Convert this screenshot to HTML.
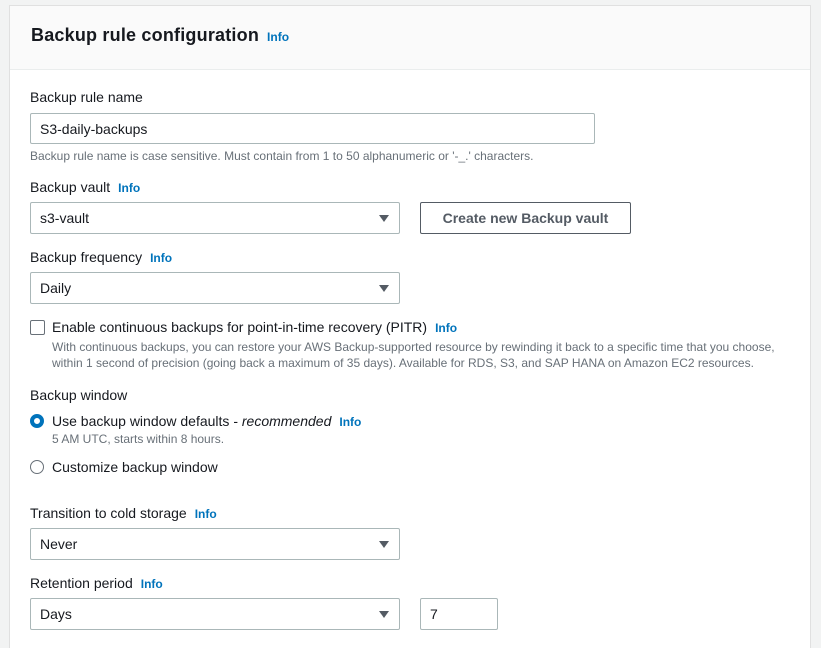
<!DOCTYPE html>
<html><head><style>
*{box-sizing:border-box;margin:0;padding:0}
html{width:821px;height:648px;overflow:hidden}
body{width:821px;height:648px;background:#f2f3f3;font-family:"Liberation Sans",sans-serif;color:#16191f;position:relative;overflow:hidden}
.panel{position:absolute;left:9px;top:5px;width:802px;height:643px;background:#fff;border:1px solid #e0e0e0;border-bottom:none}
.hdr{position:absolute;left:0;top:0;width:100%;height:64px;background:#fafafa;border-bottom:1px solid #eaeded}
.a{position:absolute;white-space:nowrap}
.lbl{font-size:14px;color:#16191f}
.info{font-size:12px;font-weight:bold;color:#0073bb;margin-left:8px}
.hint{font-size:12px;color:#687078}
.box{position:absolute;border:1px solid #aab7b8;border-radius:2px;background:#fff;font-size:14px;padding-left:9px;display:flex;align-items:center}
.tri{position:absolute;right:10px;top:12px;width:0;height:0;border-left:5px solid transparent;border-right:5px solid transparent;border-top:7px solid #545b64}
</style></head><body>
<div class="panel"><div class="hdr"></div></div>
<div class="a" style="left:31px;top:25px;font-size:18px;font-weight:bold;letter-spacing:0.2px">Backup rule configuration<span class="info" style="font-size:12px;letter-spacing:0">Info</span></div>

<div class="a lbl" style="left:30px;top:89px">Backup rule name</div>
<div class="box" style="left:30px;top:113px;width:565px;height:31px">S3-daily-backups</div>
<div class="a hint" style="left:30px;top:149px">Backup rule name is case sensitive. Must contain from 1 to 50 alphanumeric or '-_.' characters.</div>

<div class="a lbl" style="left:30px;top:179px">Backup vault<span class="info">Info</span></div>
<div class="box" style="left:30px;top:202px;width:370px;height:32px">s3-vault<div class="tri"></div></div>
<div class="box" style="left:420px;top:202px;width:211px;height:32px;border-color:#545b64;justify-content:center;padding:0;font-weight:bold;color:#545b64">Create new Backup vault</div>

<div class="a lbl" style="left:30px;top:249px">Backup frequency<span class="info">Info</span></div>
<div class="box" style="left:30px;top:272px;width:370px;height:32px">Daily<div class="tri"></div></div>

<div class="a" style="left:30px;top:320px;width:15px;height:15px;border:1.5px solid #687078;border-radius:2px"></div>
<div class="a lbl" style="left:52px;top:319px">Enable continuous backups for point-in-time recovery (PITR)<span class="info">Info</span></div>
<div class="a hint" style="left:52px;top:339px;line-height:16px">With continuous backups, you can restore your AWS Backup-supported resource by rewinding it back to a specific time that you choose,<br>within 1 second of precision (going back a maximum of 35 days). Available for RDS, S3, and SAP HANA on Amazon EC2 resources.</div>

<div class="a lbl" style="left:30px;top:387px">Backup window</div>
<div class="a" style="left:30px;top:414px;width:14px;height:14px;border-radius:50%;border:4px solid #0073bb;background:#fff"></div>
<div class="a lbl" style="left:52px;top:413px">Use backup window defaults - <i>recommended</i><span class="info">Info</span></div>
<div class="a hint" style="left:52px;top:432px">5 AM UTC, starts within 8 hours.</div>
<div class="a" style="left:30px;top:460px;width:14px;height:14px;border-radius:50%;border:1.5px solid #687078;background:#fff"></div>
<div class="a lbl" style="left:52px;top:459px">Customize backup window</div>

<div class="a lbl" style="left:30px;top:505px">Transition to cold storage<span class="info">Info</span></div>
<div class="box" style="left:30px;top:528px;width:370px;height:32px">Never<div class="tri"></div></div>

<div class="a lbl" style="left:30px;top:575px">Retention period<span class="info">Info</span></div>
<div class="box" style="left:30px;top:598px;width:370px;height:32px">Days<div class="tri"></div></div>
<div class="box" style="left:420px;top:598px;width:78px;height:32px">7</div>
</body></html>
